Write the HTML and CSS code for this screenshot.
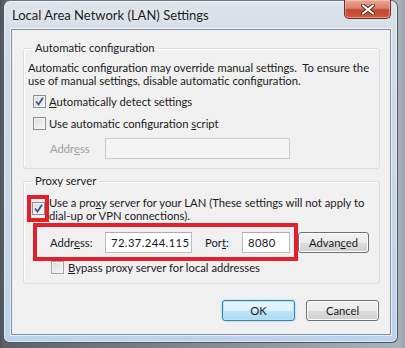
FILE: index.html
```html
<!DOCTYPE html>
<html>
<head>
<meta charset="utf-8">
<link rel="stylesheet" href="styles.css">
</head>
<body>
<div class="window">
  <div class="titlebar">
    <div class="title">Local Area Network (LAN) Settings</div>
    <div class="close">
      <svg width="14" height="11" viewBox="0 0 14 11"><path d="M2 1.5 L12 9.5 M12 1.5 L2 9.5" stroke="#5a2a22" stroke-width="4" stroke-linecap="round"/><path d="M2 1.5 L12 9.5 M12 1.5 L2 9.5" stroke="#ffffff" stroke-width="2.2" stroke-linecap="round"/></svg>
    </div>
  </div>
  <div class="client">
    <fieldset class="group auto">
      <legend>Automatic configuration</legend>
      <p class="desc">Automatic configuration may override manual settings.&nbsp; To ensure the<br>use of manual settings, disable automatic configuration.</p>
      <div class="row check-row first">
        <span class="cb checked"><svg width="9" height="9" viewBox="0 0 9 9"><path d="M1 4.5 L3.5 7.5 L8 0.8" fill="none" stroke="#3d5491" stroke-width="1.8"/></svg></span>
        <span><u>A</u>utomatically detect settings</span>
      </div>
      <div class="row check-row second">
        <span class="cb"></span>
        <span>Use automatic configuration <u>s</u>cript</span>
      </div>
      <div class="row addr-row">
        <span class="lbl disabled">Addr<u>e</u>ss</span>
        <span class="input disabled-input wide"></span>
      </div>
    </fieldset>
    <fieldset class="group proxy">
      <legend>Proxy server</legend>
      <div class="proxy-check">
        <span class="redbox"><span class="cb checked"><svg width="9" height="9" viewBox="0 0 9 9"><path d="M1 4.5 L3.5 7.5 L8 0.8" fill="none" stroke="#3d5491" stroke-width="1.8"/></svg></span></span>
        <span class="proxy-text">Use a pro<u>x</u>y server for your LAN (These settings will not apply to<br>dial-up or VPN connections).</span>
      </div>
      <div class="addr-line">
        <div class="redbox2">
          <span class="lbl">Addr<u>e</u>ss:</span>
          <span class="input addr">72.37.244.115</span>
          <span class="lbl port-lbl">Por<u>t</u>:</span>
          <span class="input port">8080</span>
        </div>
        <button class="btn adv">Advan<u>c</u>ed</button>
      </div>
      <div class="row bypass">
        <span class="cb light"></span>
        <span><u>B</u>ypass proxy server for local addresses</span>
      </div>
    </fieldset>
    <div class="buttons">
      <button class="btn ok">OK</button>
      <button class="btn cancel">Cancel</button>
    </div>
  </div>
</div>
</body>
</html>
```

FILE: styles.css
```css
html, body {
  margin: 0;
  padding: 0;
}
body {
  width: 405px;
  height: 348px;
  overflow: hidden;
  background: linear-gradient(90deg, #4d5258 0px, #5d6166 3px, #aab2bb 398px, #9aa3ad 405px);
  font-family: "Lato", "Segoe UI", sans-serif;
  font-size: 11.25px;
  color: #1a1a1a;
  white-space: nowrap;
}
u {
  text-underline-offset: 1px;
}
.window {
  box-sizing: border-box;
  width: 395px;
  height: 343px;
  margin-left: 3px;
  border: 1px solid #4a5564;
  border-top-color: #6d7784;
  border-radius: 7px 7px 6px 6px;
  background: linear-gradient(180deg, #dfe4ea 0px, #d3dbe4 40px, #c9d7e6 200px, #bcd3ec 343px);
  box-shadow: inset 0 0 0 1px rgba(255,255,255,0.55);
  display: flex;
  flex-direction: column;
}
.titlebar {
  height: 28px;
  display: flex;
  align-items: flex-start;
}
.title {
  padding: 6px 0 0 8px;
  font-size: 13px;
  color: #1a1a1a;
  text-shadow: 0 0 6px rgba(255,255,255,0.9);
}
.close {
  margin-left: auto;
  margin-right: 6px;
  margin-top: -1px;
  box-sizing: border-box;
  width: 47px;
  height: 19px;
  border: 1px solid #6b2b22;
  border-top: none;
  border-radius: 0 0 5px 5px;
  background: linear-gradient(180deg, #e9a898 0%, #d9806c 45%, #c6462f 55%, #d05a3e 100%);
  box-shadow: inset 0 0 0 1px rgba(255,210,200,0.5);
  display: flex;
  align-items: center;
  justify-content: center;
}
.client {
  flex: 1;
  margin: 0 6px 7px 7px;
  border: 1px solid #7f90a6;
  background: #f0f0f0;
  box-shadow: 0 0 0 1px rgba(255,255,255,0.6);
  padding: 0 10px 0 11px;
  display: flex;
  flex-direction: column;
}
.group {
  margin: 0;
  border: 1px solid #d5dfe5;
  border-radius: 3px;
  box-shadow: inset 1px 1px 0 #fff;
  padding: 0 0 0 4px;
  min-width: 0;
}
.group legend {
  padding: 0 3px;
  margin-left: 4px;
  line-height: 16px;
}
.auto {
  margin-top: 10px;
  height: 129px;
  box-sizing: border-box;
}
.desc {
  margin: 5px 0 0 0;
  line-height: 13px;
}
.row {
  display: flex;
  align-items: center;
  gap: 3px;
}
.check-row {
  padding-left: 5px;
}
.check-row.first { margin-top: 7px; height: 14px; }
.check-row.second { margin-top: 8px; height: 14px; }
.cb {
  box-sizing: border-box;
  width: 13px;
  height: 13px;
  border: 1px solid #8e8f8f;
  background: linear-gradient(135deg, #dcdcdc, #f8f8f8);
  box-shadow: inset 0 0 0 1px #f4f4f4;
  display: inline-flex;
  align-items: center;
  justify-content: center;
  flex: none;
}
.cb.light {
  border-color: #a4a4a4;
}
.addr-row {
  margin-top: 8px;
  padding-left: 22px;
  gap: 0;
}
.lbl {
  width: 55px;
  flex: none;
}
.disabled {
  color: #a0a0a0;
}
.input {
  box-sizing: border-box;
  flex: none;
  height: 21px;
  border: 1px solid #b9bcc2;
  border-top-color: #abadb3;
  background: #fff;
  display: inline-flex;
  align-items: center;
  padding-left: 5px;
  letter-spacing: 0.4px;
}
.disabled-input {
  background: #f4f4f4;
  border-color: #c9cbd0;
}
.wide {
  width: 185px;
}
.proxy {
  margin-top: 4px;
  height: 111px;
  box-sizing: border-box;
}
.proxy-check {
  display: flex;
  align-items: flex-start;
  margin-top: 7px;
  margin-left: -1px;
}
.redbox {
  box-sizing: border-box;
  width: 22px;
  height: 27px;
  border: 4px solid #e0202a;
  display: inline-flex;
  align-items: center;
  justify-content: center;
  margin-top: -1px;
  flex: none;
}
.proxy-text {
  line-height: 13px;
  margin-top: 0px;
}
.addr-line {
  display: flex;
  align-items: center;
  margin-top: 1px;
  margin-left: 5px;
}
.redbox2 {
  box-sizing: border-box;
  flex: none;
  width: 265px;
  height: 38px;
  border: 4px solid #e0202a;
  display: flex;
  align-items: center;
  padding-left: 13px;
}
.redbox2 .lbl {
  width: 55px;
}
.addr {
  width: 87px;
}
.redbox2 .port-lbl {
  width: 37px;
  margin-left: 13px;
}
.port {
  width: 48px;
}
.btn {
  font-family: inherit;
  font-size: 11.25px;
  color: #1a1a1a;
  box-sizing: border-box;
  border: 1px solid #707070;
  border-radius: 3px;
  background: linear-gradient(180deg, #f3f3f3 0%, #ebebeb 50%, #dddddd 51%, #cfcfcf 100%);
  box-shadow: inset 0 0 0 1px #fcfcfc;
  padding: 0;
}
.adv {
  width: 71px;
  height: 21px;
  flex: none;
}
.bypass {
  margin-top: 0px;
  padding-left: 23px;
  gap: 4px;
}
.buttons {
  display: flex;
  justify-content: flex-end;
  gap: 11px;
  margin-top: 16px;
  margin-right: 1px;
}
.ok, .cancel {
  width: 73px;
  height: 21px;
}
.ok {
  border-color: #3c7fb1;
  background: linear-gradient(180deg, #eaf6fd 0%, #d9f0fc 50%, #bee6fd 51%, #a7d9f5 100%);
  box-shadow: inset 0 0 0 1px #b5e3f8, 0 0 2px #7fc4ea;
}
```
